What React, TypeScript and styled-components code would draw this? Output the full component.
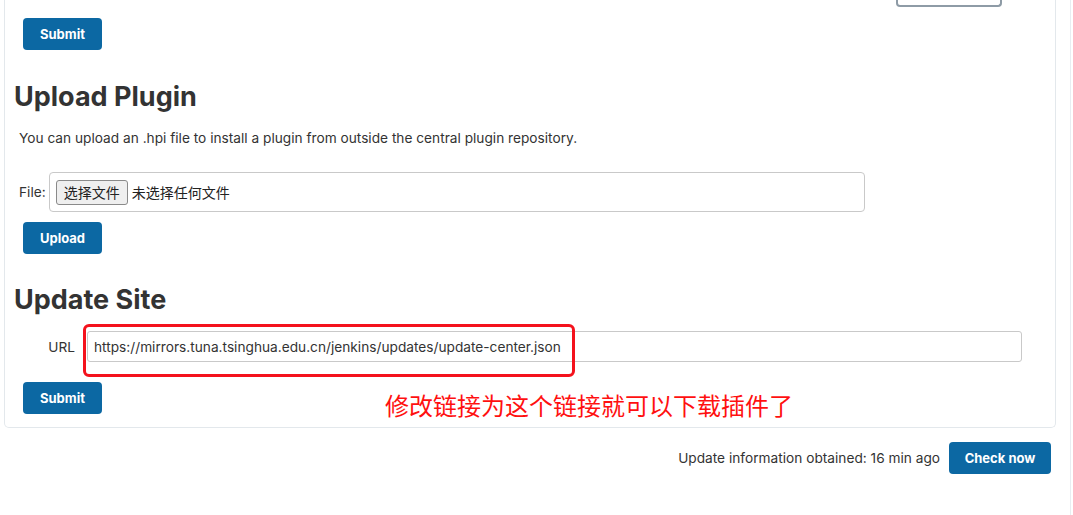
import React from 'react';
import styled, { createGlobalStyle } from 'styled-components';

const GlobalStyle = createGlobalStyle`
  html, body {
    margin: 0;
    padding: 0;
    background: #ffffff;
  }

  body {
    font-family: Inter, 'Noto Sans CJK SC', sans-serif;
    color: #333333;
    font-size: 13.7px;
  }
`;

const Column = styled.div`
  width: 1071px;
  min-height: 515px;
  border-right: 1px solid #e8edf1;
  box-sizing: border-box;
  padding-left: 4px;
`;

const Panel = styled.section`
  width: 1052px;
  box-sizing: border-box;
  border: 1px solid #e3e8ec;
  border-top: none;
  border-radius: 0 0 5px 5px;
  padding-bottom: 13px;
  display: flex;
  flex-direction: column;
  align-items: flex-start;
`;

const StubRow = styled.div`
  align-self: stretch;
  display: flex;
  justify-content: flex-end;
  padding-right: 53px;
`;

const ClippedButton = styled.div`
  width: 106px;
  height: 7px;
  box-sizing: border-box;
  border: 2px solid #8e9ba6;
  border-top: none;
  border-radius: 0 0 4px 4px;
`;

const PrimaryButton = styled.button<{ $top: number; $width?: number }>`
  margin-top: ${(p) => p.$top}px;
  margin-left: ${(p) => (p.$width ? 0 : 18)}px;
  width: ${(p) => p.$width ?? 79}px;
  height: 32px;
  border: none;
  border-radius: 4px;
  background: #0c68a3;
  color: #ffffff;
  font-family: Inter, sans-serif;
  font-weight: 700;
  font-size: 13px;
  padding: 0;
  flex-shrink: 0;
  cursor: pointer;
`;

const SectionTitle = styled.h2<{ $top: number }>`
  margin: ${(p) => p.$top}px 0 0 9px;
  font-size: 27px;
  line-height: 34px;
  font-weight: 700;
  color: #333333;
`;

const Description = styled.p`
  margin: 14px 0 0 14px;
  line-height: 20px;
  font-size: 13.7px;
`;

const FileRow = styled.div`
  margin: 24px 0 0 14px;
  display: flex;
  align-items: center;
  gap: 3px;
`;

const FieldLabel = styled.span`
  font-size: 13.7px;
  color: #333333;
`;

const FileBox = styled.div`
  width: 816px;
  height: 40px;
  box-sizing: border-box;
  border: 1px solid #c9c9c9;
  border-radius: 4px;
  display: flex;
  align-items: center;
  padding-left: 6px;
  gap: 4px;
`;

const ChooseButton = styled.span`
  height: 25px;
  box-sizing: border-box;
  padding: 0 7px;
  display: flex;
  align-items: center;
  border: 1px solid #8a8a8a;
  border-radius: 3px;
  background: #efefef;
  font-family: 'Noto Sans CJK SC', sans-serif;
  font-size: 14px;
  color: #222222;
`;

const FileStatus = styled.span`
  font-family: 'Noto Sans CJK SC', sans-serif;
  font-size: 14px;
  color: #222222;
`;

const UrlRow = styled.div`
  position: relative;
  margin-top: 14px;
  display: flex;
  align-items: center;
`;

const UrlLabel = styled.label`
  width: 82px;
  box-sizing: border-box;
  padding-right: 12px;
  text-align: right;
  font-size: 13.7px;
`;

const UrlInput = styled.input`
  width: 935px;
  height: 31px;
  box-sizing: border-box;
  border: 1px solid #c9c9c9;
  border-radius: 3px;
  padding: 0 6px;
  font-family: Inter, sans-serif;
  font-size: 13.7px;
  color: #333333;
  outline: none;
`;

const Highlight = styled.div`
  position: absolute;
  left: 78px;
  top: -7px;
  width: 492px;
  height: 53px;
  box-sizing: border-box;
  border: 3px solid #f4121c;
  border-radius: 6px;
  pointer-events: none;
`;

const SubmitRow = styled.div`
  display: flex;
  align-items: flex-end;
`;

const Annotation = styled.span`
  margin-left: 283px;
  margin-bottom: -6px;
  font-family: 'Noto Sans CJK SC', sans-serif;
  font-size: 24px;
  line-height: 30px;
  color: #ff1010;
`;

const Footer = styled.div`
  margin-top: 14px;
  padding-right: 19px;
  display: flex;
  justify-content: flex-end;
  align-items: center;
  gap: 9px;
`;

const Info = styled.span`
  font-size: 13.7px;
  color: #333333;
`;

const App = () => {
  return (
    <>
      <GlobalStyle />
      <Column>
        <Panel>
          <StubRow>
            <ClippedButton />
          </StubRow>
          <PrimaryButton $top={11}>Submit</PrimaryButton>

          <SectionTitle $top={30}>Upload Plugin</SectionTitle>
          <Description>
            You can upload an .hpi file to install a plugin from outside the
            central plugin repository.
          </Description>
          <FileRow>
            <FieldLabel>File:</FieldLabel>
            <FileBox>
              <ChooseButton>选择文件</ChooseButton>
              <FileStatus>未选择任何文件</FileStatus>
            </FileBox>
          </FileRow>
          <PrimaryButton $top={10}>Upload</PrimaryButton>

          <SectionTitle $top={29}>Update Site</SectionTitle>
          <UrlRow>
            <UrlLabel>URL</UrlLabel>
            <UrlInput
              readOnly
              defaultValue="https://mirrors.tuna.tsinghua.edu.cn/jenkins/updates/update-center.json"
            />
            <Highlight />
          </UrlRow>
          <SubmitRow>
            <PrimaryButton $top={20}>Submit</PrimaryButton>
            <Annotation>修改链接为这个链接就可以下载插件了</Annotation>
          </SubmitRow>
        </Panel>
        <Footer>
          <Info>Update information obtained: 16 min ago</Info>
          <PrimaryButton $top={0} $width={102}>
            Check now
          </PrimaryButton>
        </Footer>
      </Column>
    </>
  );
};

export default App;
